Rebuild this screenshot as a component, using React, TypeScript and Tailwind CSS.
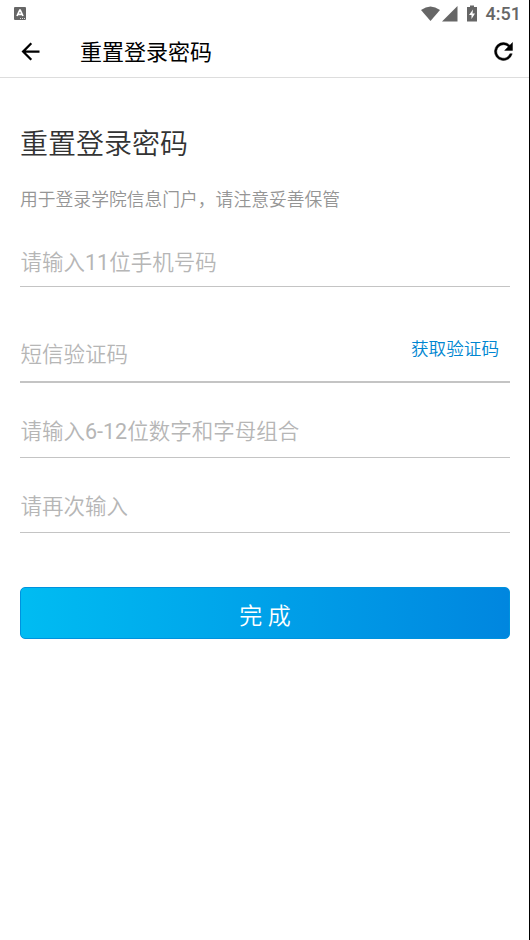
import { MdArrowBack } from 'react-icons/md';

interface FieldProps {
    placeholder: string;
    className: string;
    action?: string;
}

function Field({ placeholder, className, action }: FieldProps) {
    return (
        <div className={`flex justify-between border-[#c4c4c4] ${className}`}>
            <input
                placeholder={placeholder}
                className="h-[30px] min-w-0 flex-1 bg-transparent pl-[0.5px] font-['Roboto','Noto_Sans_CJK_SC_DemiLight','Noto_Sans_CJK_SC',sans-serif] text-[21.5px] leading-[30px] outline-none placeholder:text-[#b6b6b6]"
            />
            {action && <button className="-mt-px h-[20px] pr-[11px] text-[17.6px] leading-[20px] font-[350] text-[#0086d1]">{action}</button>}
        </div>
    );
}

function StatusBar() {
    return (
        <div className="flex h-[27px] items-center justify-between pr-2 pl-[14px] text-[#666]">
            <svg width="12" height="13" viewBox="0 0 12 13">
                <rect width="12" height="13" rx="1" fill="#666" />
                <path d="M3 9 5.800 3h.4L9 9M4 7.300h4" fill="none" stroke="#fff" strokeWidth="1.700" />
                <path d="M6 11.500h1m1 0h1m1 0h1" stroke="#ddd" strokeWidth="1" />
            </svg>
            <div className="flex items-center">
                <svg width="60" height="18" viewBox="0 0 60 18" fill="#666">
                    <path d="M1 5Q10.500-2 20 5L10.500 16Z" />
                    <path d="M37.500 1v15.500H22Z" />
                    <path d="M50 .5h4V2h3v14.500H47V2h3Z" />
                    <path d="m53 4.500-4 5.500h2.500v4l3.500-5.500h-2.500Z" fill="#fff" />
                </svg>
                <span className="ml-[6px] text-[18px] font-medium">4:51</span>
            </div>
        </div>
    );
}

function RefreshIcon() {
    return (
        <svg width="27" height="27" viewBox="0 0 24 24" fill="currentColor" stroke="currentColor" strokeWidth="0.4">
            <path d="M17.65 6.35A7.96 7.96 0 0 0 12 4a8 8 0 1 0 7.730 10h-2.080A6 6 0 1 1 12 6c1.660 0 3.140.69 4.220 1.780L13 11h7V4z" />
        </svg>
    );
}

export default function App() {
    return (
        <div className="h-[940px] w-[530px] border-r border-black bg-white font-['Roboto','Noto_Sans_CJK_SC',sans-serif]">
            <StatusBar />
            <header className="flex h-[51px] items-center border-b border-[#ddd] pr-[12px] pb-px pl-[17px] text-black">
                <MdArrowBack size={27} />
                <h1 className="mt-px ml-[36px] flex-1 text-[22px]">重置登录密码</h1>
                <RefreshIcon />
            </header>
            <main className="pr-[19px] pl-5">
                <h2 className="pt-[46px] text-[28px] leading-[42px] font-[350] text-[#333]">重置登录密码</h2>
                <p className="mt-[21px] text-[17.8px] leading-[26px] font-[350] text-[#959595]">用于登录学院信息门户，请注意妥善保管</p>
                <Field placeholder="请输入11位手机号码" className="mt-[35px] h-[39px] border-b" />
                <Field placeholder="短信验证码" action="获取验证码" className="mt-[53px] h-[43px] border-b-2" />
                <Field placeholder="请输入6-12位数字和字母组合" className="mt-[34px] h-[41px] border-b" />
                <Field placeholder="请再次输入" className="mt-[34px] h-[41px] border-b" />
                <button className="mt-[54px] h-[52px] w-full rounded-[5px] border border-[#0092de] bg-linear-to-r from-[#00bcf2] to-[#0086df] pt-[9px] text-[23px] font-[350] text-white">
                    完 成
                </button>
            </main>
        </div>
    );
}
